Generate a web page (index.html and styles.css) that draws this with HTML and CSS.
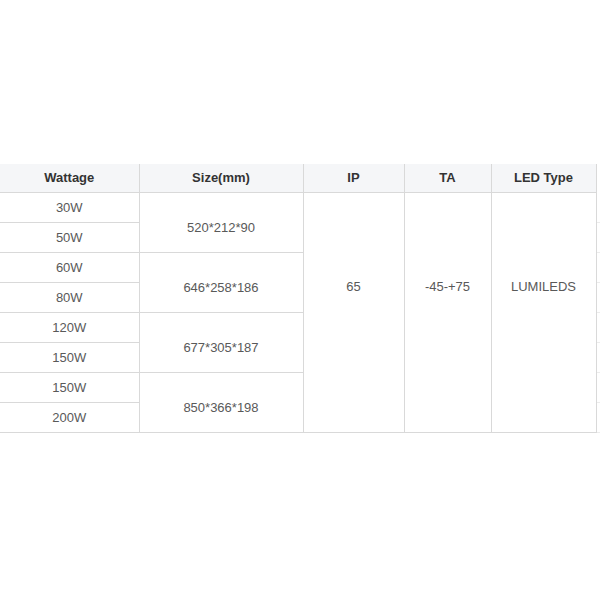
FILE: index.html
```html
<!DOCTYPE html>
<html>
<head>
<meta charset="utf-8">
<link rel="stylesheet" href="styles.css">
</head>
<body>
<div class="wrap">
<table class="spec">
<colgroup>
<col class="c1"><col class="c2"><col class="c3"><col class="c4"><col class="c5"><col class="c6">
</colgroup>
<thead>
<tr><th class="first">Wattage</th><th>Size(mm)</th><th>IP</th><th>TA</th><th>LED Type</th><th class="ghost"></th></tr>
</thead>
<tbody>
<tr><td class="first">30W</td><td rowspan="2" class="size">520*212*90</td><td rowspan="8" class="tall">65</td><td rowspan="8" class="tall">-45-+75</td><td rowspan="8" class="tall">LUMILEDS</td><td class="ghost"></td></tr>
<tr><td class="first">50W</td><td class="ghost"></td></tr>
<tr><td class="first">60W</td><td rowspan="2" class="size">646*258*186</td><td class="ghost"></td></tr>
<tr><td class="first">80W</td><td class="ghost"></td></tr>
<tr><td class="first">120W</td><td rowspan="2" class="size">677*305*187</td><td class="ghost"></td></tr>
<tr><td class="first">150W</td><td class="ghost"></td></tr>
<tr><td class="first">150W</td><td rowspan="2" class="size">850*366*198</td><td class="ghost"></td></tr>
<tr><td class="first">200W</td><td class="ghost"></td></tr>
</tbody>
</table>
</div>
</body>
</html>
```
FILE: styles.css
```css
html, body {
  margin: 0;
  padding: 0;
  background: #ffffff;
}
.wrap {
  width: 600px;
  height: 600px;
  overflow: hidden;
  padding-top: 164px;
  box-sizing: border-box;
}
.spec {
  border-collapse: collapse;
  table-layout: fixed;
  width: 640px;
  font-family: "Liberation Sans", Arial, sans-serif;
  font-size: 13px;
}
.c1 { width: 139px; }
.c2 { width: 164px; }
.c3 { width: 101px; }
.c4 { width: 87px; }
.c5 { width: 105px; }
.c6 { width: 44px; }
.spec th, .spec td {
  border: 1px solid #d9d9d9;
  text-align: center;
  padding: 0;
  box-sizing: border-box;
}
.spec th {
  height: 28px;
  background: #f5f6f8;
  color: #333333;
  font-weight: bold;
  border-top: none;
}
.spec td {
  height: 30px;
  color: #595959;
}
.spec td.size {
  padding-top: 10px;
}
.spec td.tall {
  padding-bottom: 52px;
}
.spec .first {
  border-left: none;
}
.spec .ghost {
  background: #ffffff;
  border-left: 1px solid #d4d4d4;
  border-right: none;
  border-top-color: #ececec;
  border-bottom-color: #ececec;
}
.spec th.ghost {
  border-bottom-color: #ffffff;
}
```
